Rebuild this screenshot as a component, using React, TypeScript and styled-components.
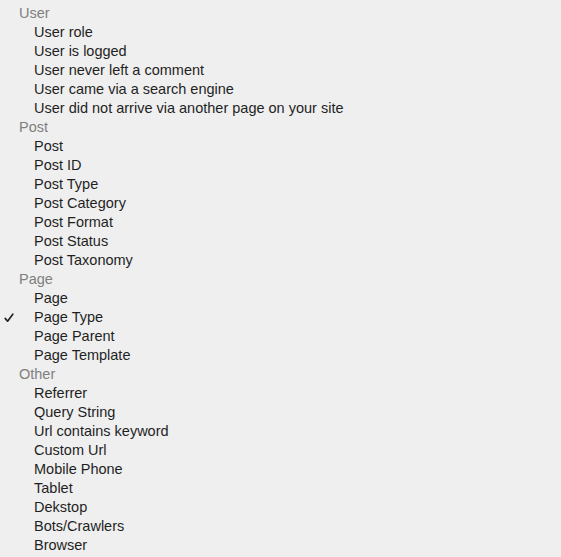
import React from "react";
import styled, { createGlobalStyle } from "styled-components";

const GlobalStyle = createGlobalStyle`
  html, body {
    margin: 0;
    padding: 0;
    background: #efefef;
  }
`;

const StyMenu = styled.div`
  width: 561px;
  height: 557px;
  box-sizing: border-box;
  padding-top: 4px;
  background-color: #efefef;
  border-radius: 4px 4px 0 0;
  font-family: "Liberation Sans", Arial, sans-serif;
  font-size: 14.5px;
  overflow: hidden;
`;

const StyGroup = styled.div`
  display: flex;
  flex-direction: column;
`;

const StyHeader = styled.div`
  height: 19px;
  line-height: 19px;
  padding-left: 19px;
  color: #7f7f7f;
`;

const StyItem = styled.div`
  position: relative;
  height: 19px;
  line-height: 19px;
  padding-left: 34px;
  color: #1f1f1f;
`;

const StyCheck = styled.svg`
  position: absolute;
  left: 4px;
  top: 5px;
`;

function CheckMark() {
  return (
    <StyCheck width="10" height="10" viewBox="0 0 10 10">
      <path
        d="M1.2 5.4 L3.6 8.2 L8.8 1.2"
        fill="none"
        stroke="#222"
        strokeWidth="1.7"
        strokeLinecap="round"
        strokeLinejoin="round"
      />
    </StyCheck>
  );
}

const groups = [
  {
    label: "User",
    items: [
      "User role",
      "User is logged",
      "User never left a comment",
      "User came via a search engine",
      "User did not arrive via another page on your site",
    ],
  },
  {
    label: "Post",
    items: [
      "Post",
      "Post ID",
      "Post Type",
      "Post Category",
      "Post Format",
      "Post Status",
      "Post Taxonomy",
    ],
  },
  {
    label: "Page",
    items: ["Page", "Page Type", "Page Parent", "Page Template"],
  },
  {
    label: "Other",
    items: [
      "Referrer",
      "Query String",
      "Url contains keyword",
      "Custom Url",
      "Mobile Phone",
      "Tablet",
      "Dekstop",
      "Bots/Crawlers",
      "Browser",
    ],
  },
];

const selected = "Page Type";

function App() {
  return (
    <>
      <GlobalStyle />
      <StyMenu>
        {groups.map((g) => (
          <StyGroup key={g.label}>
            <StyHeader>{g.label}</StyHeader>
            {g.items.map((item) => (
              <StyItem key={item}>
                {item === selected && <CheckMark />}
                {item}
              </StyItem>
            ))}
          </StyGroup>
        ))}
      </StyMenu>
    </>
  );
}

export default App;
